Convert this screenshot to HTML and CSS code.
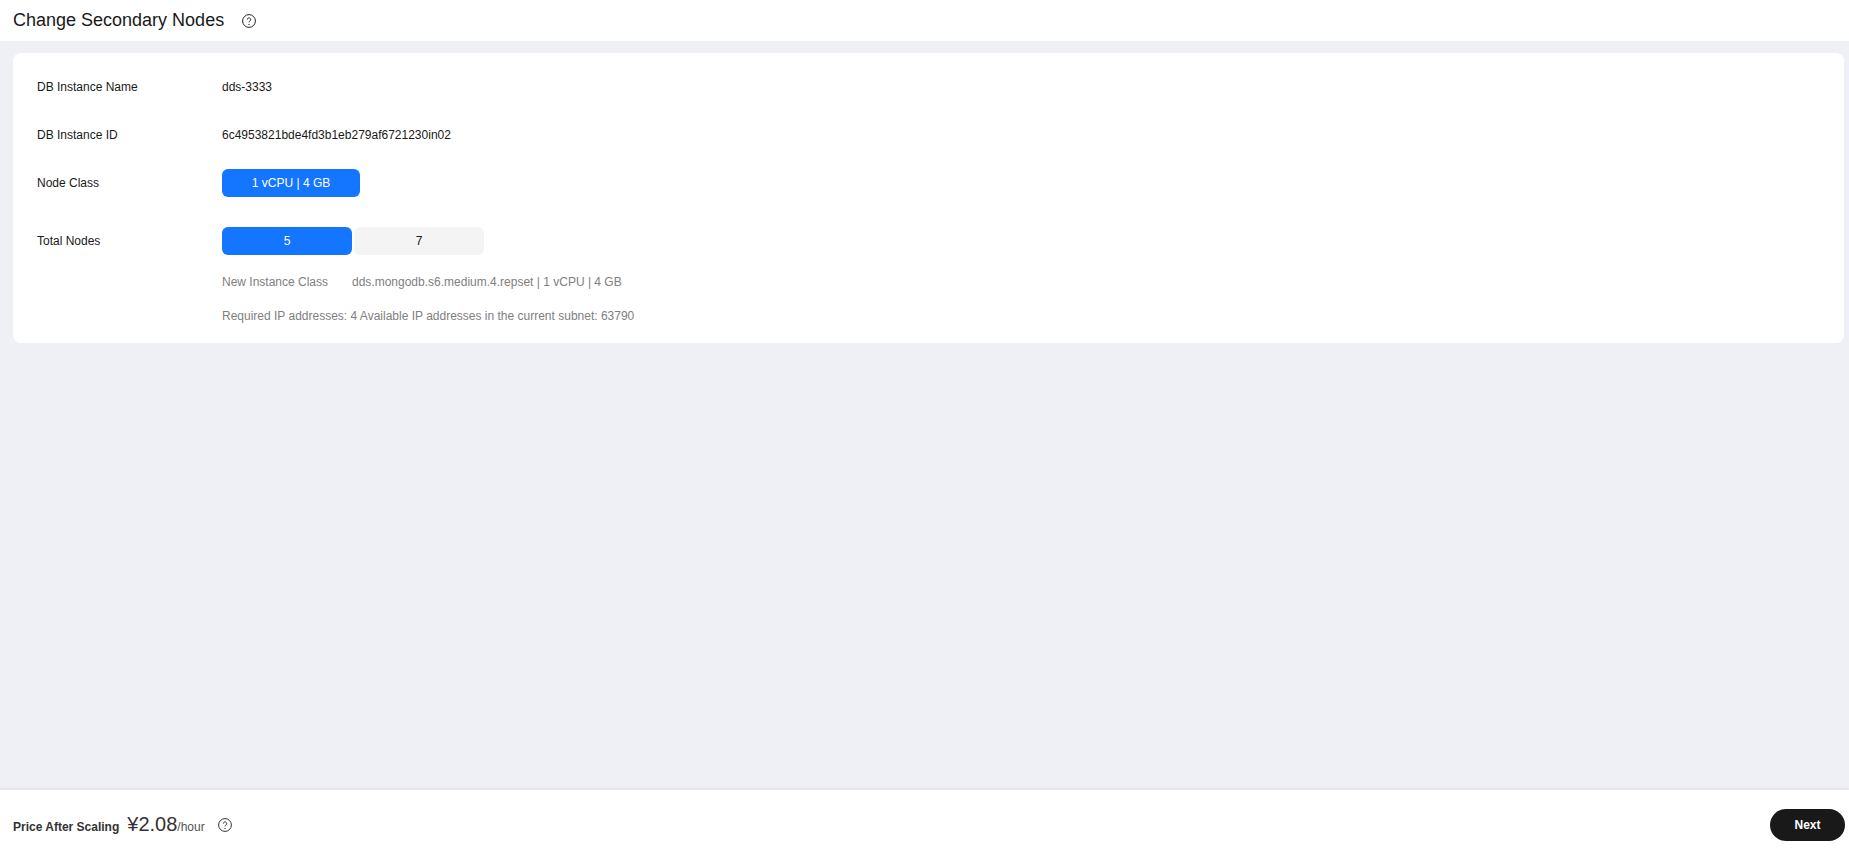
FILE: index.html
```html
<!DOCTYPE html>
<html lang="en">
<head>
<meta charset="utf-8">
<title>Change Secondary Nodes</title>
<link rel="stylesheet" href="styles.css">
</head>
<body>
<div class="page">
  <header class="header">
    <h1 class="title">Change Secondary Nodes</h1>
    <svg class="help help-title" viewBox="0 0 14 14"><circle cx="7" cy="7" r="6.4"/><path d="M5.3 5.6a1.7 1.7 0 1 1 2.6 1.4c-.6.4-.9.7-.9 1.4"/><path class="dot" d="M7 10v.9"/></svg>
  </header>
  <main class="main">
    <section class="card">
      <div class="row row-name"><div class="label">DB Instance Name</div><div class="value">dds-3333</div></div>
      <div class="row row-id"><div class="label">DB Instance ID</div><div class="value">6c4953821bde4fd3b1eb279af6721230in02</div></div>
      <div class="row row-class"><div class="label">Node Class</div><div class="value"><button class="opt opt-wide active">1 vCPU | 4 GB</button></div></div>
      <div class="row row-nodes"><div class="label">Total Nodes</div><div class="value opts"><button class="opt active">5</button><button class="opt">7</button></div></div>
      <div class="row row-note1"><div class="label"></div><div class="note"><span class="note-key">New Instance Class</span><span>dds.mongodb.s6.medium.4.repset | 1 vCPU | 4 GB</span></div></div>
      <div class="row row-note2"><div class="label"></div><div class="note">Required IP addresses: 4 Available IP addresses in the current subnet: 63790</div></div>
    </section>
  </main>
  <footer class="footer">
    <div class="price">
      <span class="price-label">Price After Scaling</span>
      <span class="price-value">¥2.08</span><span class="price-unit">/hour</span>
      <svg class="help help-price" viewBox="0 0 14 14"><circle cx="7" cy="7" r="6.4"/><path d="M5.3 5.6a1.7 1.7 0 1 1 2.6 1.4c-.6.4-.9.7-.9 1.4"/><path class="dot" d="M7 10v.9"/></svg>
    </div>
    <button class="next">Next</button>
  </footer>
</div>
</body>
</html>
```

FILE: styles.css
```css
* { box-sizing: border-box; }
html, body { margin: 0; height: 100%; }
body { font-family: "Liberation Sans", Arial, sans-serif; font-size: 12px; color: #191919; background: #eef0f5; overflow: hidden; }
.page { height: 855px; display: flex; flex-direction: column; }
.header { height: 41px; flex: none; background: #fff; display: flex; align-items: center; padding-left: 13px; }
.title { margin: 0; font-size: 18px; font-weight: 400; line-height: 41px; color: #191919; }
.help { width: 14px; height: 14px; fill: none; stroke: #222; stroke-width: 1; }
.help .dot { stroke-width: 1.1; }
.help-title { margin-left: 18px; }
.main { flex: 1; padding: 12px 5px 0 13px; }
.card { height: 290px; background: #fff; border-radius: 8px; padding: 20px 24px 0; }
.row { display: flex; align-items: center; }
.label { width: 185px; flex: none; }
.row-name { height: 28px; }
.row-id { height: 28px; margin-top: 20px; }
.row-class { height: 28px; margin-top: 20px; }
.row-nodes { height: 28px; margin-top: 30px; }
.row-note1 { height: 16px; margin-top: 19px; }
.row-note2 { height: 16px; margin-top: 18px; }
.opts { display: flex; gap: 2px; }
.opt { width: 130px; height: 28px; border: 0; padding: 0; border-radius: 6px; background: #f4f4f4; color: #191919; font: 12px "Liberation Sans", Arial, sans-serif; }
.opt-wide { width: 138px; }
.opt.active { background: #1476ff; color: #fff; font-weight: 400; }
.note { color: #808080; display: flex; }
.note-key { width: 130px; flex: none; }
.footer { height: 66px; flex: none; background: #fff; border-top: 1px solid #e4e5e9; box-shadow: 0 -1px 2px rgba(0,0,0,.05); display: flex; align-items: center; justify-content: space-between; padding: 0 4px 0 13px; }
.price { display: flex; align-items: baseline; padding-top: 4px; }
.price-label { font-weight: 700; color: #333; margin-right: 8px; }
.price-value { font-size: 20px; color: #333; }
.price-unit { color: #555; }
.help-price { margin-left: 13px; align-self: center; stroke: #333; }
.next { width: 75px; height: 32px; margin-top: 5px; border: 0; border-radius: 16px; background: #191919; color: #fff; font: 700 12px "Liberation Sans", Arial, sans-serif; }
```
